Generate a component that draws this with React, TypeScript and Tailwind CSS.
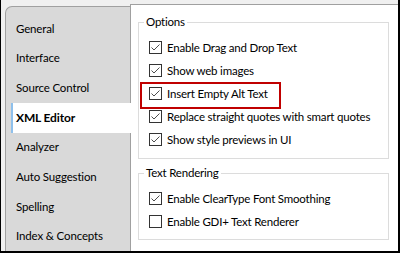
const tabs = [
  "General",
  "Interface",
  "Source Control",
  "XML Editor",
  "Analyzer",
  "Auto Suggestion",
  "Spelling",
  "Index & Concepts",
];

const options = [
  { label: "Enable Drag and Drop Text", checked: true },
  { label: "Show web images", checked: true },
  { label: "Insert Empty Alt Text", checked: true, marked: true },
  { label: "Replace straight quotes with smart quotes", checked: true },
  { label: "Show style previews in UI", checked: true },
];

const rendering = [
  { label: "Enable ClearType Font Smoothing", checked: true },
  { label: "Enable GDI+ Text Renderer", checked: false },
];

function CheckBox({ checked }: { checked: boolean }) {
  return (
    <span className="flex h-[13px] w-[13px] shrink-0 items-center justify-center border border-[#333333] bg-white">
      {checked && (
        <svg width="11" height="11" viewBox="0 0 11 11">
          <path d="M1.5 5.5 L4 8 L9.5 2.5" fill="none" stroke="#4d4d4d" strokeWidth="1" />
        </svg>
      )}
    </span>
  );
}

type Item = { label: string; checked: boolean; marked?: boolean };

function Row({ item }: { item: Item }) {
  return (
    <div className="relative flex h-[23px] items-center gap-[5px] whitespace-nowrap pl-[10px]">
      <CheckBox checked={item.checked} />
      <span>{item.label}</span>
      {/* highlight frame */}
      {item.marked && (
        <span className="absolute left-[1px] top-0 h-[27px] w-[141px] border-2 border-[#c00000]" />
      )}
    </div>
  );
}

function Group({ title, items, className }: { title: string; items: Item[]; className: string }) {
  return (
    <fieldset className={`ml-[7px] mr-[9px] min-w-0 border border-[#dcdcdc] pb-[6px] ${className}`}>
      <legend className="ml-[5px] px-[2px] leading-[16px]">{title}</legend>
      <div className="pt-[6px]">
        {items.map((it) => (
          <Row key={it.label} item={it} />
        ))}
      </div>
    </fieldset>
  );
}

export default function App() {
  return (
    <div
      className="flex h-[253px] w-[400px] border-b-2 border-l border-r-2 border-black bg-[#f0f0f0] pl-[4px] pt-[4px] text-[11.5px] leading-[16px] tracking-[-0.2px] text-black"
      style={{ fontFamily: 'Lato, "Noto Sans", sans-serif' }}
    >
      {/* tab strip */}
      <div className="mt-[2px] flex w-[125px] shrink-0 flex-col rounded-tl-[7px] border-l border-t border-[#a0a0a0] bg-[#d9d9d9] pt-[7px] tracking-[-0.15px]">
        {tabs.map((t) =>
          t === "XML Editor" ? (
            <div
              key={t}
              className="relative z-10 -mr-px ml-[5px] flex h-[30px] items-center border-l-2 border-[#8ec0ec] bg-white pl-[3px] text-[12px] font-bold"
            >
              {t}
            </div>
          ) : (
            <div key={t} className="flex h-[30px] items-center pl-[10px]">
              {t}
            </div>
          )
        )}
      </div>

      {/* settings panel */}
      <div className="min-w-0 flex-1 border-l border-t border-[#a0a0a0] bg-white">
        <Group title="Options" items={options} className="mt-[9px] pb-[7px]" />
        <Group title="Text Rendering" items={rendering} className="mt-[6px]" />
      </div>
    </div>
  );
}
